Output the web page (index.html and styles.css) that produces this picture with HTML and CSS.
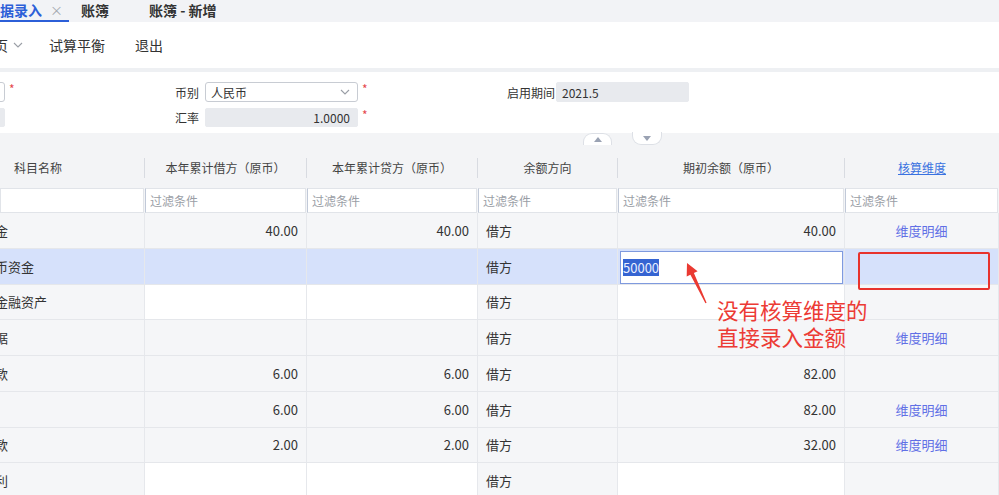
FILE: index.html
```
<!DOCTYPE html>
<html lang="zh-CN">
<head>
	<meta charset="UTF-8">
	<title>期初数据录入</title>
	<link rel="stylesheet" href="styles.css">
</head>
<body>
	<!-- 页签 -->
	<div class="tabs">
		<div class="tab active"><span>数据录入</span><span class="close">×</span></div>
		<div class="tab"><span>账簿</span><span class="close hide">×</span></div>
		<div class="tab"><span>账簿 - 新增</span></div>
	</div>

	<!-- 工具栏 -->
	<div class="toolbar">
		<span class="tool first">分页
			<svg class="chev" width="10" height="6" viewBox="0 0 10 6"><path d="M1 1 L5 5 L9 1" fill="none" stroke="#9a9ea6" stroke-width="1.1"/></svg>
		</span>
		<span class="tool">试算平衡</span>
		<span class="tool exit">退出</span>
	</div>

	<!-- 表头表单 -->
	<div class="form">
		<div class="form-row">
			<div class="fld fld-a"><div class="ipt"></div><i class="req">*</i></div>
			<div class="fld fld-b">
				<label>币别</label>
				<div class="ipt select">人民币
					<svg width="10" height="6" viewBox="0 0 10 6"><path d="M1 1 L5 5 L9 1" fill="none" stroke="#9a9ea6" stroke-width="1.1"/></svg>
				</div>
				<i class="req">*</i>
			</div>
			<div class="fld fld-c"><label>启用期间</label><div class="ipt ro">2021.5</div></div>
		</div>
		<div class="form-row">
			<div class="fld fld-a"><div class="ipt ro"></div></div>
			<div class="fld fld-b">
				<label>汇率</label>
				<div class="ipt ro num">1.0000</div>
				<i class="req">*</i>
			</div>
		</div>
	</div>

	<!-- 表格 -->
	<div class="sheet">
		<div class="toggles">
			<span class="tgl up"><svg width="8" height="5" viewBox="0 0 8 5"><path d="M0 5 L4 0 L8 5 Z" fill="#9aa2b3"/></svg></span>
			<span class="tgl down"><svg width="8" height="5" viewBox="0 0 8 5"><path d="M0 0 L4 5 L8 0 Z" fill="#9aa2b3"/></svg></span>
		</div>

		<div class="row head">
			<div class="th first"><span>科目名称</span></div>
			<div class="th"><span>本年累计借方（原币）</span></div>
			<div class="th"><span>本年累计贷方（原币）</span></div>
			<div class="th"><span>余额方向</span></div>
			<div class="th"><span>期初余额（原币）</span></div>
			<div class="th last"><span><a class="link">核算维度</a></span></div>
		</div>

		<div class="row filter">
			<div class="fc"><div class="fi"></div></div>
			<div class="fc"><div class="fi">过滤条件</div></div>
			<div class="fc"><div class="fi">过滤条件</div></div>
			<div class="fc"><div class="fi">过滤条件</div></div>
			<div class="fc"><div class="fi">过滤条件</div></div>
			<div class="fc"><div class="fi">过滤条件</div></div>
		</div>

		<div class="row">
			<div class="td name">库存现金</div>
			<div class="td num">40.00</div>
			<div class="td num">40.00</div>
			<div class="td">借方</div>
			<div class="td num">40.00</div>
			<div class="td dim">维度明细</div>
		</div>
		<div class="row current">
			<div class="td name">其他货币资金</div>
			<div class="td"></div>
			<div class="td"></div>
			<div class="td">借方</div>
			<div class="td editing"><div class="editor"><span class="sel">50000</span></div></div>
			<div class="td mark"><div class="redbox"></div></div>
		</div>
		<div class="row">
			<div class="td name">交易性金融资产</div>
			<div class="td w"></div>
			<div class="td w"></div>
			<div class="td">借方</div>
			<div class="td w"></div>
			<div class="td"></div>
		</div>
		<div class="row">
			<div class="td name">应收票据</div>
			<div class="td"></div>
			<div class="td"></div>
			<div class="td">借方</div>
			<div class="td"></div>
			<div class="td dim">维度明细</div>
		</div>
		<div class="row">
			<div class="td name">应收账款</div>
			<div class="td num">6.00</div>
			<div class="td num">6.00</div>
			<div class="td">借方</div>
			<div class="td num">82.00</div>
			<div class="td"></div>
		</div>
		<div class="row">
			<div class="td name">应收款</div>
			<div class="td num">6.00</div>
			<div class="td num">6.00</div>
			<div class="td">借方</div>
			<div class="td num">82.00</div>
			<div class="td dim">维度明细</div>
		</div>
		<div class="row">
			<div class="td name">预付账款</div>
			<div class="td num">2.00</div>
			<div class="td num">2.00</div>
			<div class="td">借方</div>
			<div class="td num">32.00</div>
			<div class="td dim">维度明细</div>
		</div>
		<div class="row">
			<div class="td name">应收股利</div>
			<div class="td w"></div>
			<div class="td w"></div>
			<div class="td">借方</div>
			<div class="td w"></div>
			<div class="td"></div>
		</div>

		<!-- 标注 -->
		<svg class="arrow" width="34" height="48" viewBox="0 0 34 48">
			<polygon points="9,5 19.6,13.2 15.9,14.9 28.6,44.8 27.4,45.2 12.4,16.7 8.7,18.4" fill="#ea3a32"/>
		</svg>
		<div class="note">没有核算维度的<br>直接录入金额</div>
	</div>
</body>
</html>
```

FILE: styles.css
```
*{
	box-sizing: border-box;
}
html, body{
	margin: 0;
	padding: 0;
}
body{
	width: 999px;
	height: 495px;
	overflow: hidden;
	background: #fff;
	font-family: "Noto Sans CJK SC", "Noto Sans", sans-serif;
	font-size: 13px;
	color: #333;
}

/* 页签 */
.tabs{
	display: flex;
	height: 22px;
	background: #f2f3f6;
}
.tab{
	display: flex;
	align-items: center;
	gap: 8px;
	padding: 0 6px;
	margin-right: 6px;
	font-size: 14px;
	font-weight: bold;
	line-height: 20px;
	color: #333;
	border-bottom: 2px solid transparent;
}
.tab.active{
	margin-left: -20px;
	color: #2c5fd8;
	border-bottom-color: #2c5fd8;
}
.tab .close{
	font-size: 13px;
	font-weight: normal;
	color: #a4a8b0;
}
.tab .close.hide{
	visibility: hidden;
	margin-right: 1px;
}

/* 工具栏 */
.toolbar{
	display: flex;
	align-items: center;
	height: 50px;
	gap: 26px;
	font-size: 14px;
	color: #333;
	border-bottom: 4px solid #eef0f3;
}
.tool{
	display: flex;
	align-items: center;
	line-height: 20px;
}
.tool.first{
	margin-left: -20px;
}
.tool.exit{
	margin-left: 4px;
}
.tool .chev{
	margin-left: 5px;
}

/* 表单 */
.form{
	padding: 10px 0 5px;
}
.form-row{
	display: grid;
	grid-template-columns: 175px 332px 1fr;
	height: 20px;
	margin-bottom: 6px;
	font-size: 12px;
}
.form-row:last-child{
	margin-bottom: 0;
	height: 19px;
}
.fld{
	display: flex;
	align-items: center;
}
.fld label{
	width: 30px;
	color: #333;
	white-space: nowrap;
}
.fld-c label{
	width: 49px;
}
.ipt{
	height: 100%;
	display: flex;
	align-items: center;
	padding: 0 5px;
	border: 1px solid #c8ccd3;
	border-radius: 3px;
	background: #fff;
	color: #333;
}
.ipt.ro{
	border-color: #e8eaee;
	background: #e8eaee;
	border-radius: 2px;
}
.ipt.num{
	justify-content: flex-end;
	padding-right: 7px;
}
.fld-a .ipt{
	width: 100px;
	margin-left: -95px;
}
.fld-b .ipt{
	width: 153px;
}
.fld-c .ipt{
	width: 133px;
}
.select{
	justify-content: space-between;
	padding-right: 7px;
}
.req{
	font-style: normal;
	color: #e5484d;
	margin-left: 4px;
	align-self: flex-start;
	line-height: 14px;
}

/* 表格 */
.sheet{
	position: relative;
	background: #f3f4f6;
}
.toggles{
	display: flex;
	height: 16px;
	padding-left: 583px;
	gap: 20px;
	background: linear-gradient(#fff 0, #fff 1px, #f3f4f6 1px);
}
.tgl{
	display: flex;
	align-items: center;
	justify-content: center;
	width: 29px;
	background: #fff;
	border: 1px solid #dde0e6;
}
.tgl.up{
	height: 12px;
	margin-top: 1px;
	border-bottom: none;
	border-radius: 9px 9px 0 0;
}
.tgl.down{
	width: 30px;
	height: 13px;
	border-top: none;
	border-radius: 0 0 9px 9px;
}
.row{
	display: grid;
	grid-template-columns: 145px 162px 171px 140px 227px 154px;
	height: 35.75px;
	border-bottom: 1px solid #e5e7eb;
}
.row.head{
	height: 40px;
	border-bottom: none;
}
.th{
	display: flex;
	align-items: center;
	font-size: 12px;
	color: #444;
}
.th span{
	flex: 1;
	height: 20px;
	line-height: 20px;
	text-align: center;
	border-right: 1px solid #d8dbe1;
}
.th.first span{
	text-align: left;
	padding-left: 14px;
}
.th.last span{
	border-right: none;
}
.link{
	color: #3a72e0;
	text-decoration: underline;
}
.row.filter{
	height: 25px;
	border-bottom: none;
}
.fc{
	padding-right: 1px;
}
.fi{
	height: 100%;
	padding-left: 4px;
	font-size: 12px;
	line-height: 23px;
	color: #9a9ea6;
	background: #fff;
	border: 1px solid #e1e4e9;
	border-left-color: #c1c9d8;
}
.fc:first-child .fi{
	border-left-color: #e1e4e9;
}
.td{
	display: flex;
	align-items: center;
	padding: 0 8px;
	overflow: hidden;
	white-space: nowrap;
	background: #f5f6f8;
	border-right: 1px solid #e6e8ec;
}
.td.w{
	background: #fff;
}
.td.name{
	padding-left: 0;
	text-indent: -44px;
}
.td.num{
	justify-content: flex-end;
}
.td.dim{
	justify-content: center;
	color: #6170e6;
}
.row.current .td{
	background: #d6e1fb;
}
.td.editing{
	padding: 2px 1px 0 2px;
	align-items: stretch;
}
.editor{
	flex: 1;
	display: flex;
	align-items: center;
	padding-left: 2px;
	background: #fff;
	border: 1px solid #7f9ade;
}
.sel{
	background: #3564d2;
	color: #e9efff;
	line-height: 17px;
}
.td.mark{
	position: relative;
	overflow: visible;
}
.redbox{
	position: absolute;
	left: 13px;
	top: 3px;
	width: 132px;
	height: 38px;
	border: 2px solid #e8322c;
	border-radius: 2px;
	z-index: 2;
}
.arrow{
	position: absolute;
	left: 678px;
	top: 126px;
}
.note{
	position: absolute;
	left: 717px;
	top: 164px;
	font-size: 21.5px;
	line-height: 27px;
	color: #ec3b35;
	white-space: nowrap;
}
```
